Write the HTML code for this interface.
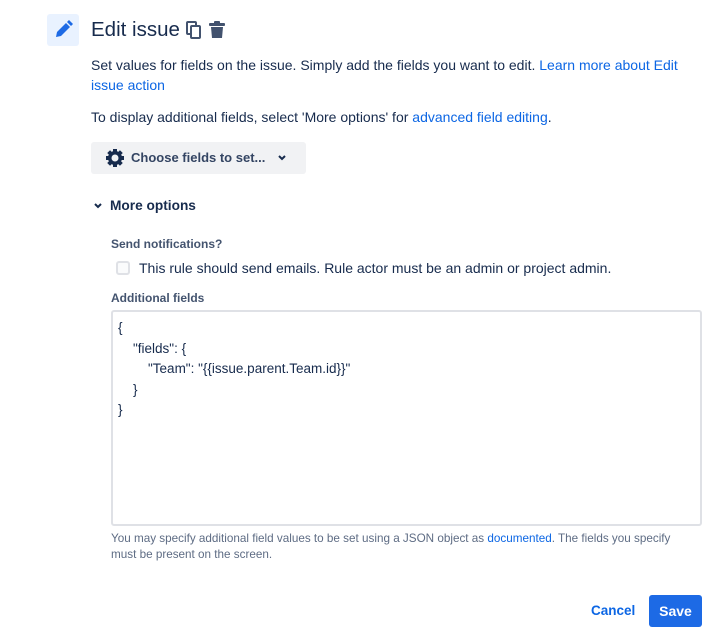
<!DOCTYPE html>
<html><head><meta charset="utf-8"><style>
*{box-sizing:border-box;margin:0;padding:0}
body{width:719px;height:638px;background:#fff;font-family:"Liberation Sans",sans-serif;color:#172b4d;position:relative;overflow:hidden;font-size:14px}
.a{position:absolute;white-space:nowrap}
a{color:#0c66e4;text-decoration:none}
</style></head><body>
<div class="a" style="left:47px;top:14px;width:32px;height:32px;background:#e9f2ff;border-radius:3px">
<svg width="32" height="32" viewBox="0 0 32 32"><path d="M9 23l1-5 9-9 4 4-9 9z" fill="#1d6ae5"/><path d="M20 8l2-2 4 4-2 2z" fill="#1d6ae5"/></svg></div>
<div class="a" style="left:91px;top:17px;font-size:20.5px;line-height:26px;color:#172b4d">Edit issue</div>
<svg class="a" style="left:186px;top:21px" width="16" height="18" viewBox="0 0 16 18"><rect x="1" y="1" width="9" height="12" rx="1" fill="none" stroke="#42526e" stroke-width="2"/><rect x="5" y="5" width="9" height="12" rx="1" fill="#fff" stroke="#42526e" stroke-width="2"/></svg>
<svg class="a" style="left:208px;top:21px" width="18" height="18" viewBox="0 0 18 18"><rect x="1" y="2" width="16" height="3" rx="1" fill="#42526e"/><rect x="6" y="0" width="6" height="3" rx="1" fill="#42526e"/><path d="M3 6h12l-1 11H4z" fill="#42526e"/></svg>
<div class="a" style="left:91px;top:55px;line-height:20px">Set values for fields on the issue. Simply add the fields you want to edit. <a>Learn more about Edit</a><br><a>issue action</a></div>
<div class="a" style="left:91px;top:107px;line-height:20px">To display additional fields, select 'More options' for <a>advanced field editing</a>.</div>
<div class="a" style="left:91px;top:142px;width:215px;height:32px;background:#f1f2f4;border-radius:3px"></div>
<svg class="a" style="left:105px;top:148px" width="20" height="20" viewBox="0 0 20 20"><g fill="#172b4d"><circle cx="10" cy="10" r="7"/><rect x="8" y="1" width="4" height="18"/><rect x="1" y="8" width="18" height="4"/><rect x="8" y="1" width="4" height="18" transform="rotate(45 10 10)"/><rect x="8" y="1" width="4" height="18" transform="rotate(-45 10 10)"/></g><circle cx="10" cy="10" r="3.5" fill="#f1f2f4"/></svg>
<div class="a" style="left:131px;top:149px;line-height:18px;font-weight:bold;color:#344563;font-size:13px">Choose fields to set...</div>
<svg class="a" style="left:277px;top:154px" width="10" height="8" viewBox="0 0 10 8"><path d="M2 2l3 3 3-3" fill="none" stroke="#172b4d" stroke-width="2"/></svg>
<svg class="a" style="left:93px;top:202px" width="10" height="8" viewBox="0 0 10 8"><path d="M2 2l3 3 3-3" fill="none" stroke="#172b4d" stroke-width="2"/></svg>
<div class="a" style="left:110px;top:197px;line-height:18px;font-weight:bold;color:#172b4d;font-size:13.7px">More options</div>
<div class="a" style="left:111px;top:236px;font-size:12px;line-height:16px;font-weight:bold;color:#44546f">Send notifications?</div>
<div class="a" style="left:116px;top:261px;width:14px;height:14px;border:2px solid #dfe1e6;border-radius:3px;background:#fafbfc"></div>
<div class="a" style="left:139px;top:259px;line-height:18px">This rule should send emails. Rule actor must be an admin or project admin.</div>
<div class="a" style="left:111px;top:290px;font-size:12px;line-height:16px;font-weight:bold;color:#44546f">Additional fields</div>
<div class="a" style="left:111px;top:310px;width:591px;height:216px;border:2px solid #dfe1e6;border-radius:3px"></div>
<div class="a" style="left:118px;top:318px;line-height:20.5px;font-size:13.5px">{<br>&nbsp;&nbsp;&nbsp;&nbsp;"fields": {<br>&nbsp;&nbsp;&nbsp;&nbsp;&nbsp;&nbsp;&nbsp;&nbsp;"Team": "{{issue.parent.Team.id}}"<br>&nbsp;&nbsp;&nbsp;&nbsp;}<br>}</div>
<div class="a" style="left:111px;top:531px;font-size:11.7px;line-height:16px;color:#5e6c84">You may specify additional field values to be set using a JSON object as <a>documented</a>. The fields you specify<br>must be present on the screen.</div>
<div class="a" style="left:591px;top:602px;line-height:18px;font-weight:bold;color:#0c66e4;font-size:13.5px">Cancel</div>
<div class="a" style="left:649px;top:595px;width:53px;height:32px;background:#1d6ae5;border-radius:3px;color:#fff;font-weight:bold;text-align:center;line-height:32px">Save</div>
</body></html>
